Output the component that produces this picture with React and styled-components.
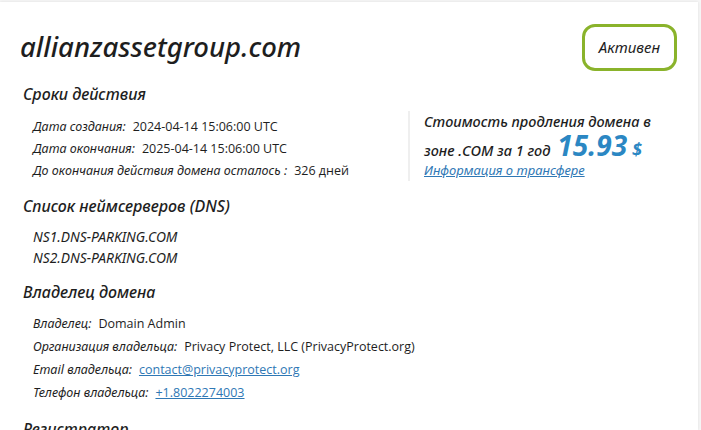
import React from 'react'
import styled, { createGlobalStyle } from 'styled-components'

const GlobalStyle = createGlobalStyle`
  body {
    margin: 0;
    background: #f6f6f6;
    font-family: "Open Sans", "Liberation Sans", sans-serif;
    color: #1e1e1e;
  }
`

const Card = styled.div`
  background: #fff;
  margin: 2px 3px 0 0;
  height: 428px;
  overflow: hidden;
  box-shadow: 0 0 3px rgba(0, 0, 0, 0.1);
  padding: 0 20px;
  box-sizing: border-box;
`

const Header = styled.div`
  display: flex;
  justify-content: space-between;
  align-items: center;
  padding-top: 21px;
  height: 48px;
`

const Domain = styled.h1`
  margin: 0;
  font-family: "Noto Sans", sans-serif;
  font-style: italic;
  font-weight: 500;
  font-size: 27.5px;
  line-height: 36px;
`

const Badge = styled.div`
  border: 3px solid #8ab32b;
  border-radius: 13px;
  padding: 0 14px;
  height: 41px;
  display: flex;
  align-items: center;
  font-family: "Noto Sans", sans-serif;
  font-style: italic;
  font-size: 15px;
  margin-right: 1px;
`

const SectionTitle = styled.h2`
  margin: ${p => p.$top || 10}px 0 0 3px;
  font-family: "Noto Sans", sans-serif;
  font-style: italic;
  font-weight: 500;
  font-size: 16px;
  line-height: 24px;
`

const TermsRow = styled.div`
  display: flex;
  align-items: flex-start;
`

const Rows = styled.div`
  padding: ${p => p.$pt || 5}px 0 0 13px;
  width: ${p => p.$w || 'auto'};
  flex-shrink: 0;
`

const Row = styled.div`
  font-size: 12.5px;
  line-height: ${p => p.$lh || 22}px;
  white-space: nowrap;
`

const Label = styled.span`
  font-family: "Noto Sans", sans-serif;
  font-style: italic;
  margin-right: 7px;
`

const Link = styled.a`
  color: #2f78b5;
  text-decoration: underline;
`

const PriceBox = styled.div`
  border-left: 2px solid #efefef;
  margin-top: 5px;
  padding: 1px 0 0 14px;
  height: 69px;
  font-family: "Noto Sans", sans-serif;
  font-style: italic;
  font-weight: 500;
  font-size: 14.5px;
`

const PriceLine = styled.div`
  display: flex;
  align-items: baseline;
  height: ${p => p.$h || 19}px;
  line-height: 18px;
  white-space: nowrap;
`

const Price = styled.span`
  color: #2b87c3;
  font-size: 28px;
  font-weight: 700;
  line-height: 1;
  margin-left: 7px;
`

const Currency = styled.span`
  color: #2b87c3;
  font-size: 18px;
  font-weight: 700;
  line-height: 1;
  margin-left: 5px;
`

const TransferLink = styled(Link)`
  display: block;
  font-weight: 400;
  font-size: 13px;
  line-height: 18px;
`

const NsRow = styled(Row)`
  font-family: "Noto Sans", sans-serif;
  font-style: italic;
  font-size: 13.8px;
  line-height: 21px;
`

export default function App() {
  return (
    <>
      <GlobalStyle />
      <Card>
        <Header>
          <Domain>allianzassetgroup.com</Domain>
          <Badge>Активен</Badge>
        </Header>

        <SectionTitle $top={11}>Сроки действия</SectionTitle>
        <TermsRow>
          <Rows $pt={10} $w="375px">
            <Row><Label>Дата создания:</Label>2024-04-14 15:06:00 UTC</Row>
            <Row><Label>Дата окончания:</Label>2025-04-14 15:06:00 UTC</Row>
            <Row><Label>До окончания действия домена осталось :</Label>326 дней</Row>
          </Rows>
          <PriceBox>
            <PriceLine>Стоимость продления домена в</PriceLine>
            <PriceLine $h={30}>
              <span>зоне .COM за 1 год</span>
              <Price>15.93</Price>
              <Currency>$</Currency>
            </PriceLine>
            <TransferLink href="#">Информация о трансфере</TransferLink>
          </PriceBox>
        </TermsRow>

        <SectionTitle $top={12}>Список неймсерверов (DNS)</SectionTitle>
        <Rows $pt={8}>
          <NsRow>NS1.DNS-PARKING.COM</NsRow>
          <NsRow>NS2.DNS-PARKING.COM</NsRow>
        </Rows>

        <SectionTitle $top={12}>Владелец домена</SectionTitle>
        <Rows $pt={8}>
          <Row $lh={23}><Label>Владелец:</Label>Domain Admin</Row>
          <Row $lh={23}><Label>Организация владельца:</Label>Privacy Protect, LLC (PrivacyProtect.org)</Row>
          <Row $lh={23}><Label>Email владельца:</Label><Link href="#">contact@privacyprotect.org</Link></Row>
          <Row $lh={23}><Label>Телефон владельца:</Label><Link href="#">+1.8022274003</Link></Row>
        </Rows>

        <SectionTitle $top={13}>Регистратор</SectionTitle>
      </Card>
    </>
  )
}
